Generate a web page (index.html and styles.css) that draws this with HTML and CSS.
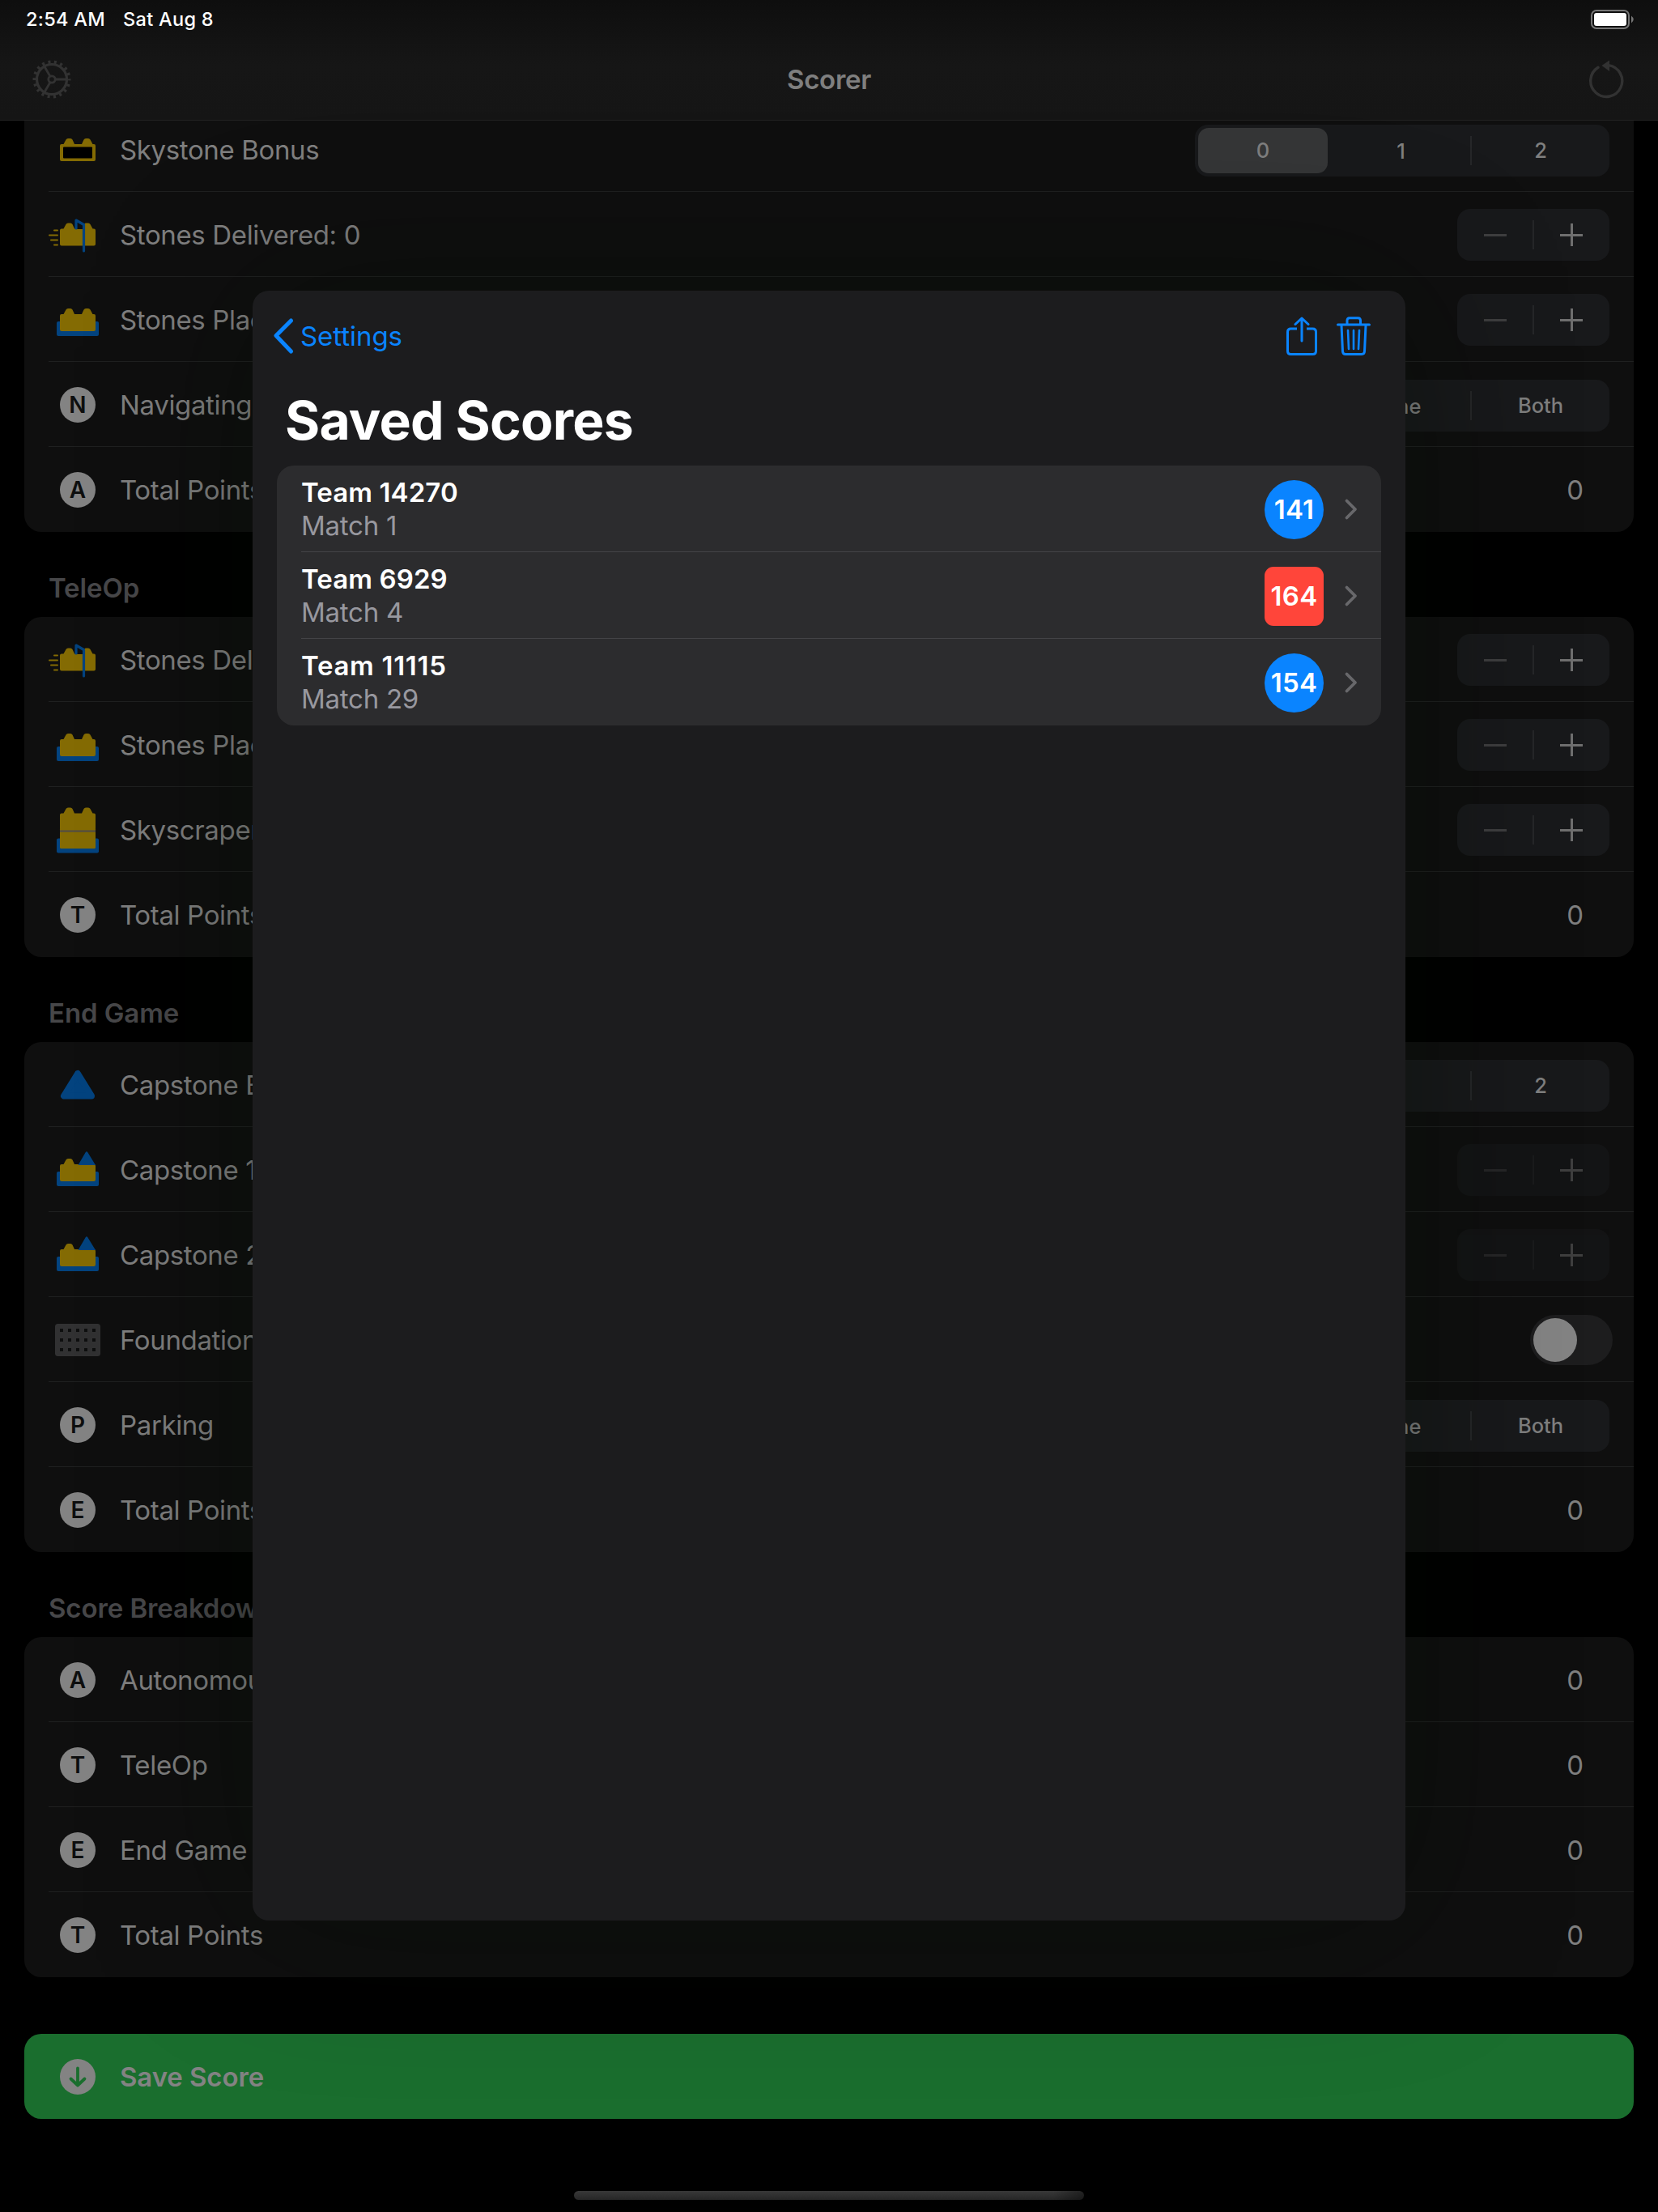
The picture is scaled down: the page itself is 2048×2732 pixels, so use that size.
FILE: index.html
```
<!DOCTYPE html>
<html lang="en">
<head>
<meta charset="utf-8">
<title>Scorer</title>
<link rel="stylesheet" href="styles.css">
</head>
<body>
<svg class="defs" width="0" height="0" aria-hidden="true">
  <defs>
    <path id="brick" d="M2 7H4.500L7.500 1.500Q8.300 0 10 0H13Q14.700 0 15.500 1.500L18 7H27L29.500 1.500Q30.300 0 32 0H35Q36.700 0 37.500 1.500L40.500 7H42Q44 7 44 9V26Q44 28 42 28H2Q0 28 0 26V9Q0 7 2 7Z"/>
    <symbol id="skystone" viewBox="0 0 72 72"><use href="#brick" x="14" y="22" fill="#846b03"/><rect x="18" y="32.500" width="36" height="14" rx="1" fill="#000"/></symbol>
    <symbol id="delivered" viewBox="0 0 72 72">
      <use href="#brick" x="14" y="21.500" fill="#846b03"/>
      <path d="M7 30.500h4M1 36.500h10M3 42.500h8M7 48.500h4" stroke="#846b03" stroke-width="2" stroke-linecap="round"/>
      <path d="M34 28V18L43.500 23.500V29H36Z" fill="#0e0f0f"/>
      <path d="M34 28V18L43.500 23.500V56" fill="none" stroke="#03437f" stroke-width="3.200" stroke-linejoin="round" stroke-linecap="round"/>
    </symbol>
    <symbol id="tray" viewBox="0 0 72 72"><path d="M12 38H60Q62 38 62 40V54Q62 56 60 56H12Q10 56 10 54V40Q10 38 12 38Z" fill="#03437f"/></symbol>
    <symbol id="placed" viewBox="0 0 72 72"><use href="#tray" width="72" height="72"/><use href="#brick" x="14" y="22" fill="#846b03"/></symbol>
    <symbol id="skyscraper" viewBox="0 0 72 72"><use href="#tray" y="8.500" width="72" height="72"/><rect x="14" y="34" width="44" height="25" rx="1.500" fill="#846b03"/><use href="#brick" x="14" y="8.500" fill="#846b03"/><path d="M14 37.500H58" stroke="#4f4b48" stroke-width="2"/></symbol>
    <symbol id="capstone" viewBox="0 0 72 72"><path d="M36 22L19 49.500H53Z" fill="#03437f" stroke="#03437f" stroke-width="8" stroke-linejoin="round"/></symbol>
    <symbol id="capped" viewBox="0 0 72 72"><use href="#tray" width="72" height="72"/><path d="M16 29H18.500L21.500 23.500Q22.300 22 24 22H27Q28.700 22 29.500 23.500L32 29H56Q58 29 58 31V48Q58 50 56 50H16Q14 50 14 48V31Q14 29 16 29Z" fill="#846b03"/><path d="M36.500 30L45.500 14.500Q47 12 48.500 14.500L58 30Z" fill="#03437f"/></symbol>
    <symbol id="foundation" viewBox="0 0 72 72"><rect x="8" y="16" width="56" height="40" rx="3.500" fill="#313132"/><path d="M14 24H58M14 36H58M14 48H58" stroke="#0e0f0f" stroke-width="4" stroke-dasharray="4 6"/></symbol>
    <symbol id="back" viewBox="0 0 26 44"><path d="M22.500 3L4 21.500L22.500 41" fill="none" stroke="#0a84ff" stroke-width="5" stroke-linecap="round" stroke-linejoin="round"/></symbol>
    <symbol id="next" viewBox="0 0 18 28"><path d="M3.500 3.500L14 14L3.500 24.500" fill="none" stroke="#68686b" stroke-width="3.800" stroke-linecap="round" stroke-linejoin="round"/></symbol>
  </defs>
</svg>

<div class="app">
  <header class="topbar">
    <div class="status"><span>2:54 AM</span><span>Sat Aug 8</span>
      <svg class="battery" width="53" height="24" viewBox="0 0 53 24"><rect x="1" y="1" width="46" height="22" rx="6" fill="none" stroke="#767676" stroke-width="2"/><rect x="4" y="4" width="40" height="16" rx="3" fill="#fff"/><path d="M50 7.500Q55.500 12 50 16.500Z" fill="#767676"/></svg>
    </div>
    <div class="nav">
      <svg class="gear" width="48" height="48" viewBox="0 0 48 48" fill="none" stroke="#323232">
        <circle cx="24" cy="24" r="18.500" stroke-width="3.200"/><circle cx="24" cy="24" r="21.500" stroke-width="4" stroke-dasharray="3 4.505" stroke-dashoffset="1.500"/><circle cx="24" cy="24" r="4.200" stroke-width="2.800"/>
        <path d="M28.500 24H42M21.800 20L14.600 7.800M21.800 28L14.600 40.200" stroke-width="2.800"/>
      </svg>
      <h1>Scorer</h1>
      <svg class="reset" width="44" height="50" viewBox="0 0 44 50"><path d="M12 10.300A19.500 19.500 0 1 0 25 7.600" fill="none" stroke="#323232" stroke-width="3.400" stroke-linecap="round"/><path d="M16.500 8L26 1.500V15Z" fill="#323232"/></svg>
    </div>
  </header>

  <main class="list">
    <section class="card first">
      <div class="row"><svg class="ico"><use href="#skystone"/></svg><span class="label">Skystone Bonus</span><div class="seg"><span class="on">0</span><span>1</span><span class="div">2</span></div></div>
      <div class="row"><svg class="ico"><use href="#delivered"/></svg><span class="label">Stones Delivered: 0</span><div class="step"><i class="minus"></i><i class="plus"></i></div></div>
      <div class="row"><svg class="ico"><use href="#placed"/></svg><span class="label">Stones Placed: 0</span><div class="step"><i class="minus"></i><i class="plus"></i></div></div>
      <div class="row"><b class="dot">N</b><span class="label">Navigating</span><div class="seg"><span class="on">None</span><span>One</span><span class="div">Both</span></div></div>
      <div class="row"><b class="dot">A</b><span class="label">Total Points</span><span class="num">0</span></div>
    </section>

    <h2>TeleOp</h2>
    <section class="card">
      <div class="row"><svg class="ico"><use href="#delivered"/></svg><span class="label">Stones Delivered: 0</span><div class="step"><i class="minus"></i><i class="plus"></i></div></div>
      <div class="row"><svg class="ico"><use href="#placed"/></svg><span class="label">Stones Placed: 0</span><div class="step"><i class="minus"></i><i class="plus"></i></div></div>
      <div class="row"><svg class="ico"><use href="#skyscraper"/></svg><span class="label">Skyscraper Height: 0</span><div class="step"><i class="minus"></i><i class="plus"></i></div></div>
      <div class="row"><b class="dot">T</b><span class="label">Total Points</span><span class="num">0</span></div>
    </section>

    <h2>End Game</h2>
    <section class="card">
      <div class="row"><svg class="ico"><use href="#capstone"/></svg><span class="label">Capstone Bonus</span><div class="seg"><span class="on">0</span><span>1</span><span class="div">2</span></div></div>
      <div class="row"><svg class="ico"><use href="#capped"/></svg><span class="label">Capstone 1 Height: 0</span><div class="step off"><i class="minus"></i><i class="plus"></i></div></div>
      <div class="row"><svg class="ico"><use href="#capped"/></svg><span class="label">Capstone 2 Height: 0</span><div class="step off"><i class="minus"></i><i class="plus"></i></div></div>
      <div class="row"><svg class="ico"><use href="#foundation"/></svg><span class="label">Foundation Moved</span><div class="switch"><i></i></div></div>
      <div class="row"><b class="dot">P</b><span class="label">Parking</span><div class="seg"><span class="on">None</span><span>One</span><span class="div">Both</span></div></div>
      <div class="row"><b class="dot">E</b><span class="label">Total Points</span><span class="num">0</span></div>
    </section>

    <h2>Score Breakdown</h2>
    <section class="card">
      <div class="row"><b class="dot">A</b><span class="label">Autonomous</span><span class="num">0</span></div>
      <div class="row"><b class="dot">T</b><span class="label">TeleOp</span><span class="num">0</span></div>
      <div class="row"><b class="dot">E</b><span class="label">End Game</span><span class="num">0</span></div>
      <div class="row"><b class="dot">T</b><span class="label">Total Points</span><span class="num">0</span></div>
    </section>

    <section class="card save">
      <div class="row"><svg class="ico" viewBox="0 0 72 72"><circle cx="36" cy="36" r="22" fill="#838383"/><path d="M36 25.500V46M27.500 38.500L36 46.500L44.500 38.500" fill="none" stroke="#1a6e2e" stroke-width="3.800" stroke-linecap="round" stroke-linejoin="round"/></svg><span class="label">Save Score</span></div>
    </section>
  </main>

  <div class="sheet">
    <div class="sheet-nav">
      <svg width="26" height="44"><use href="#back"/></svg><span class="back">Settings</span>
      <svg class="tool" width="38" height="48" viewBox="0 0 38 48" fill="none" stroke="#0a84ff" stroke-width="3" stroke-linecap="round" stroke-linejoin="round"><path d="M13 15H5.500Q1.500 15 1.500 19V42.500Q1.500 46.500 5.500 46.500H32.500Q36.500 46.500 36.500 42.500V19Q36.500 15 32.500 15H25" stroke-linecap="butt"/><path d="M19 30V2.500M11 9.500L19 2L27 9.500"/></svg>
      <svg class="tool" width="42" height="48" viewBox="0 0 42 48" fill="none" stroke="#0a84ff" stroke-width="3" stroke-linecap="round" stroke-linejoin="round"><path d="M1.500 10H40.500M13 10V5Q13 1.800 16 1.800H26.500Q29.500 1.800 29.500 5V10M6 11L7.500 43Q7.700 46.500 11 46.500H31Q34.300 46.500 34.500 43L36 11"/><path d="M14 17L15 40M21 17V40M28 17L27 40" stroke-width="2.600"/></svg>
    </div>
    <h3>Saved Scores</h3>
    <div class="scores">
      <div class="score"><div class="who"><strong>Team 14270</strong><span>Match 1</span></div><b class="badge">141</b><svg width="18" height="28"><use href="#next"/></svg></div>
      <div class="score"><div class="who"><strong>Team 6929</strong><span>Match 4</span></div><b class="badge red">164</b><svg width="18" height="28"><use href="#next"/></svg></div>
      <div class="score"><div class="who"><strong class="wide">Team 11115</strong><span>Match 29</span></div><b class="badge">154</b><svg width="18" height="28"><use href="#next"/></svg></div>
    </div>
  </div>
  <div class="home"></div>
</div>
</body>
</html>
```
FILE: styles.css
```
* { box-sizing: border-box; margin: 0; padding: 0; }
body { width: 2048px; height: 2732px; overflow: hidden; background: #000; font-family: Inter, "Liberation Sans", sans-serif; font-size: 33px; color: #7f7f7f; }
.defs { display: block; }
.app { position: relative; width: 2048px; height: 2732px; overflow: hidden; display: flex; flex-direction: column; }

.topbar { height: 149px; background: linear-gradient(#0e0e0e, #161616 55%, #151515); border-bottom: 1px solid #212121; flex: none; }
.status { height: 48px; display: flex; align-items: center; gap: 22px; padding: 0 30px 0 32px; color: #fff; font-size: 23.5px; font-weight: 500; letter-spacing: .3px; }
.status span { margin-top: -1px; }
.battery { margin-left: auto; }
.nav { height: 100px; display: flex; align-items: center; justify-content: space-between; padding: 0 42px 0 40px; }
.nav h1 { margin-left: -2px; font-size: 33px; font-weight: 600; color: #7f7f7f; letter-spacing: -.3px; }

.list { padding: 0 30px; display: flex; flex-direction: column; }
.card { background: #0f0f0f; border-radius: 21px; overflow: hidden; flex: none; }
.first { border-radius: 0 0 21px 21px; margin-top: -17px; clip-path: inset(17px 0 0 0); }
.row { height: 105px; margin-left: 30px; padding-right: 30px; display: flex; align-items: center; box-shadow: inset 0 -1px #1f2020; }
.row:last-child { box-shadow: none; }
.ico { width: 72px; height: 72px; flex: none; overflow: visible; }
.dot { width: 44px; height: 44px; margin: 0 14px; border-radius: 50%; background: #838383; color: #0e0f0f; font-size: 28px; font-weight: 600; line-height: 44px; text-align: center; flex: none; }
.label { margin-left: 16px; margin-right: auto; letter-spacing: -.36px; white-space: nowrap; }
.num { margin-right: 32px; }
h2 { height: 105px; padding: 42px 0 0 30px; font-size: 33px; line-height: 54px; font-weight: 600; letter-spacing: -.1px; color: #474749; flex: none; }
.seg { width: 512px; height: 64px; margin-top: 3px; border-radius: 16px; background: #18191b; display: grid; grid-template-columns: 165px 171px 172px; align-items: center; padding: 4px 0 4px 4px; font-size: 25.5px; font-weight: 450; text-align: center; }
.seg .on { height: 56px; line-height: 56px; width: 160px; border-radius: 13px; background: #353637; font-weight: 500; }
.seg .div { border-left: 2px solid #262729; line-height: 36px; }
.step { width: 188px; height: 64px; margin-top: 1px; border-radius: 16px; background: #18191b; display: grid; grid-template-columns: 1fr 1fr; place-items: center; background-image: linear-gradient(#262729, #262729); background-size: 2px 36px; background-repeat: no-repeat; background-position: 93px 14px; }
.step i { width: 28px; height: 28px; }
.step .minus { background: linear-gradient(#3e3e3f, #3e3e3f) center / 28px 3px no-repeat; }
.step .plus { background: linear-gradient(#6f6f6f, #6f6f6f) center / 28px 3px no-repeat, linear-gradient(#6f6f6f, #6f6f6f) center / 3px 28px no-repeat; }
.off { opacity: .5; }
.switch { width: 102px; height: 62px; margin-right: -4px; border-radius: 31px; background: #1d1d1e; padding: 4px; }
.switch i { display: block; width: 54px; height: 54px; border-radius: 50%; background: #838383; }
.save { margin-top: 70px; background: #1a6e2e; }
.save .label { font-weight: 600; color: #838383; letter-spacing: -.1px; }

.sheet { position: absolute; left: 312px; top: 359px; width: 1424px; height: 2013px; border-radius: 20px; background: #1c1c1e; box-shadow: 0 0 200px rgba(5, 13, 0, .4); padding: 0 30px; }
.sheet-nav { height: 112px; display: flex; align-items: center; padding-right: 13px; }
.sheet-nav > svg:first-child { margin-left: -5px; }
.back { margin-left: 8px; margin-right: auto; color: #0a84ff; letter-spacing: -.05px; }
.tool + .tool { margin-left: 24px; }
h3 { height: 104px; padding-left: 10px; font-size: 66px; line-height: 97px; font-weight: 700; color: #fff; letter-spacing: -.8px; }
.scores { background: #2c2c2e; border-radius: 21px; overflow: hidden; }
.score { height: 107px; margin-left: 30px; padding-right: 28px; display: flex; align-items: center; box-shadow: inset 0 -1px #444447; }
.score:last-child { box-shadow: none; }
.who { display: flex; flex-direction: column; margin-right: auto; line-height: 41px; color: #98989f; letter-spacing: -.25px; }
.who strong { color: #fff; font-weight: 600; letter-spacing: .1px; }
.who .wide { letter-spacing: .7px; }
.badge { width: 73px; height: 73px; line-height: 73px; margin-top: 2px; margin-right: 25px; border-radius: 50%; background: #0a84ff; color: #fff; text-align: center; font-weight: 600; letter-spacing: .3px; }
.red { background: #ff453a; border-radius: 11px; }
.home { position: absolute; left: 709px; top: 2706px; width: 630px; height: 11px; border-radius: 5.5px; background: linear-gradient(90deg, transparent 94%, rgba(0, 0, 0, .4)), linear-gradient(#383838, #272727); }
```
